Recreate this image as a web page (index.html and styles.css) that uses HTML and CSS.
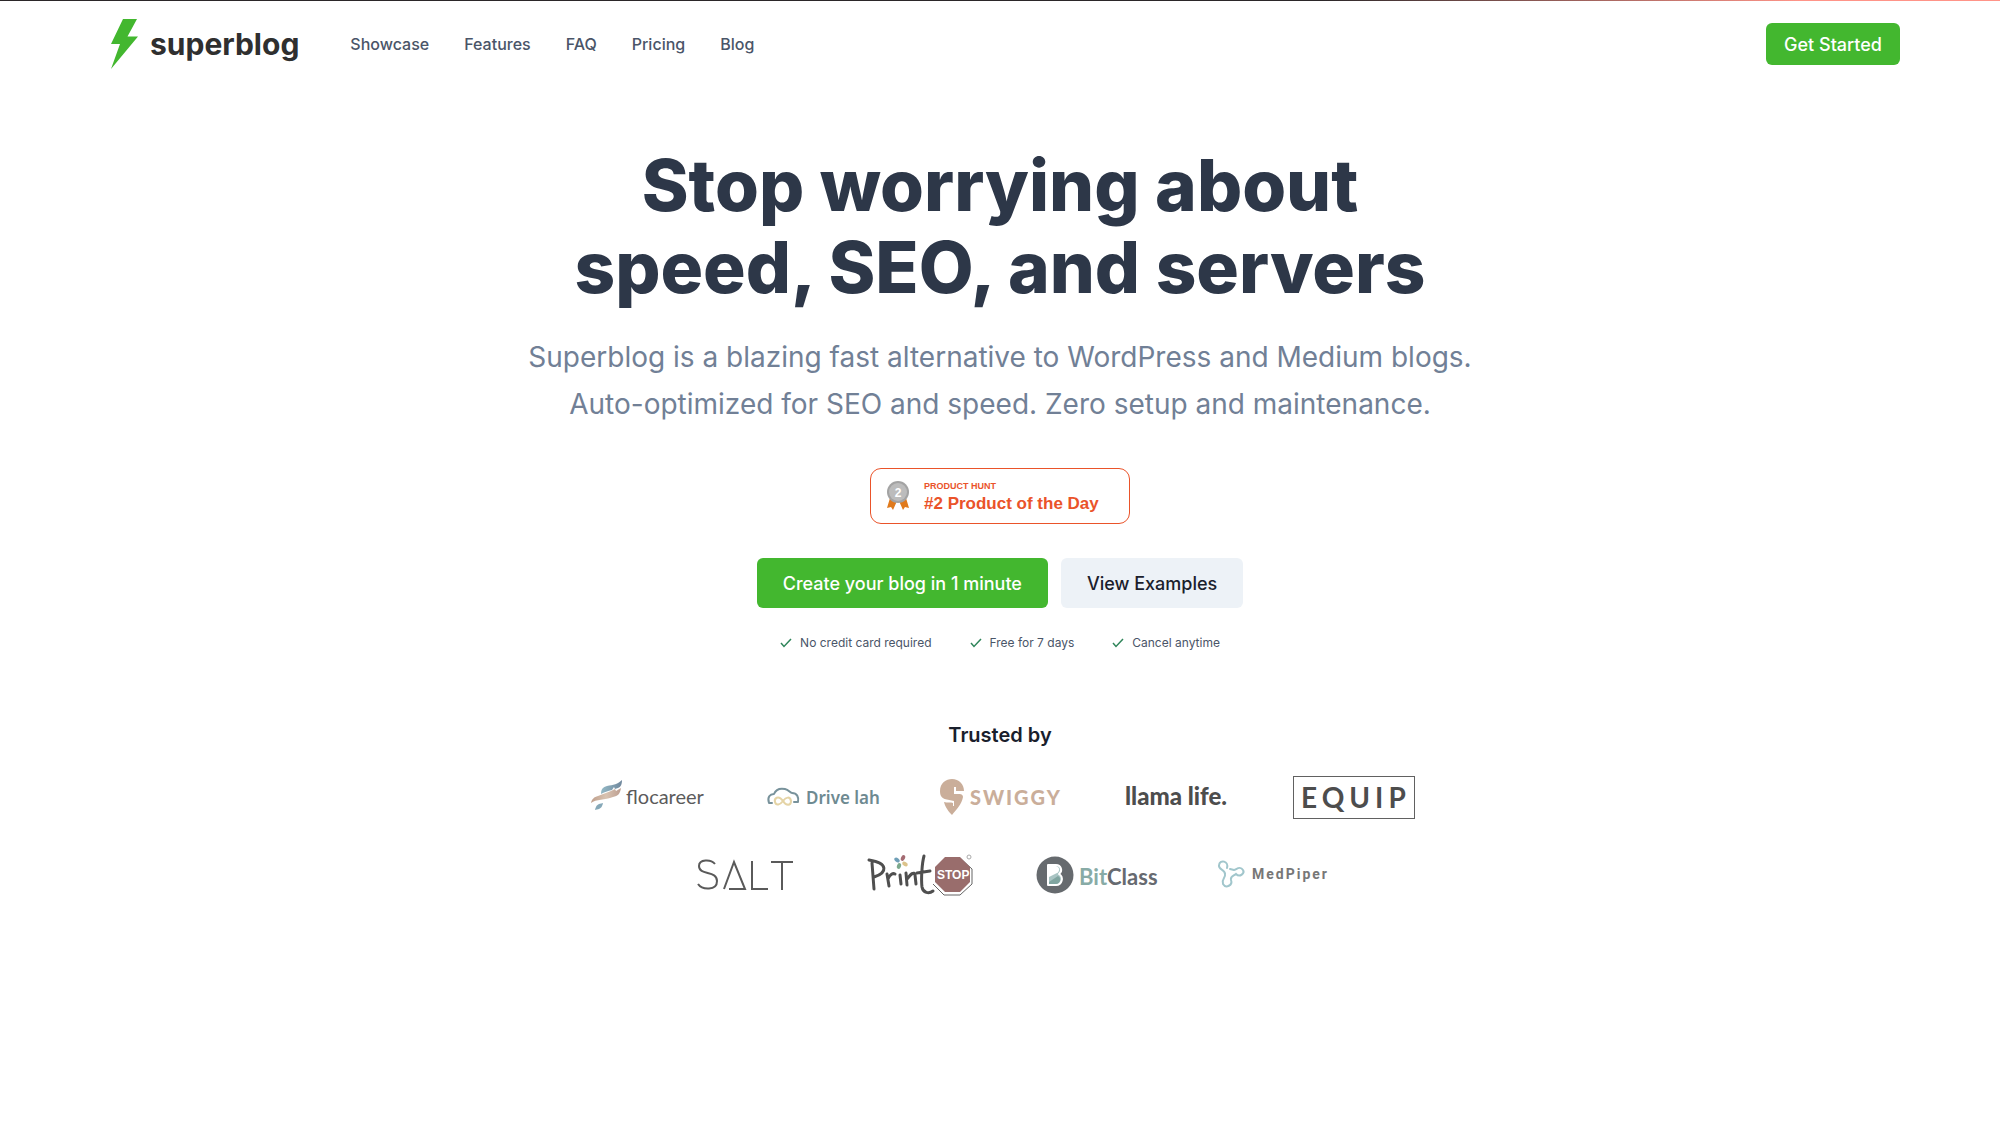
FILE: index.html
```html
<!DOCTYPE html>
<html lang="en">
<head>
    <meta charset="UTF-8">
    <meta name="viewport" content="width=device-width, initial-scale=1.0">
    <title>Superblog - Blazing fast blogging platform</title>
    <link rel="stylesheet" href="styles.css">
</head>
<body>
    <div class="top-line"></div>
    <header class="header">
        <a href="#" class="brand">
            <svg class="bolt" viewBox="0 0 27 50" aria-hidden="true">
                <path d="M12 0H26L16.500 17.500H27L0 50L9 25H0Z" fill="#43b72f"/>
            </svg>
            <span>superblog</span>
        </a>
        <nav class="nav">
            <a href="#">Showcase</a>
            <a href="#">Features</a>
            <a href="#">FAQ</a>
            <a href="#">Pricing</a>
            <a href="#">Blog</a>
        </nav>
        <button type="button" class="btn btn-small">Get Started</button>
    </header>

    <main class="hero">
        <h1>Stop worrying about<br>speed, SEO, and servers</h1>
        <p class="lead">Superblog is a blazing fast alternative to WordPress and Medium blogs.<br>Auto-optimized for SEO and speed. Zero setup and maintenance.</p>

        <a href="#" class="ph-badge">
            <svg class="medal" viewBox="0 0 22 30" aria-hidden="true">
                <path d="M3 17L0 27L4 26L6 29L10 20Z" fill="#e07a1c"/>
                <path d="M19 17L22 27L18 26L16 29L12 20Z" fill="#e07a1c"/>
                <circle cx="11" cy="11" r="11" fill="#a3a3a3"/>
                <circle cx="11" cy="11" r="9" fill="#bcbcbc"/>
                <text x="11" y="15.500" class="medal-number">2</text>
            </svg>
            <span class="ph-text">
                <span class="ph-label">PRODUCT HUNT</span>
                <span class="ph-title">#2 Product of the Day</span>
            </span>
        </a>

        <div class="actions">
            <button type="button" class="btn">Create your blog in 1 minute</button>
            <button type="button" class="btn btn-light">View Examples</button>
        </div>

        <ul class="perks">
            <li><svg viewBox="0 0 12 10" aria-hidden="true"><path d="M1 5L4 8.500L11 1"/></svg>No credit card required</li>
            <li><svg viewBox="0 0 12 10" aria-hidden="true"><path d="M1 5L4 8.500L11 1"/></svg>Free for 7 days</li>
            <li><svg viewBox="0 0 12 10" aria-hidden="true"><path d="M1 5L4 8.500L11 1"/></svg>Cancel anytime</li>
        </ul>
    </main>

    <section class="trusted">
        <h2>Trusted by</h2>
        <div class="logos">
            <!-- Flocareer -->
            <svg class="logo" viewBox="0 0 128 48">
                <defs>
                    <linearGradient id="flo-blue" x1="0" x2="1"><stop offset="0" stop-color="#93b9c6"/><stop offset="1" stop-color="#71889d"/></linearGradient>
                    <linearGradient id="flo-tan" x1="0" x2="1"><stop offset="0" stop-color="#bf9e8b"/><stop offset=".5" stop-color="#d8c3b1"/><stop offset="1" stop-color="#bd9e90"/></linearGradient>
                </defs>
                <path d="M17 21C17 16 19 14 23 13C29 12 34 11 38 7C38 11 37 14 34 15L31 16L30 14L28 17C24 18 20 19 17 21Z" fill="url(#flo-blue)"/>
                <path d="M7 30C8 26 10 24 14 23L27 18L31 16L32 18L37 15C36 21 34 23 29 24C21 27 12 26 7 30Z" fill="url(#flo-tan)"/>
                <path d="M11 37C12 32 14 31 19 30C18 35 16 36 11 37Z" fill="#86a8b8"/>
                <text x="42" y="31" class="flo-text">flocareer</text>
            </svg>
            <!-- Drive lah -->
            <svg class="logo" viewBox="0 0 128 48">
                <path d="M12 30H9C7 24 10 21 14 21C16 16 20 15 25 16C29 17 30 20 32 20C37 20 39 24 38 29H34" fill="none" stroke="#78929b" stroke-width="2" stroke-linejoin="round" stroke-linecap="round"/>
                <path d="M23 28C18 21 14 26 15 29C16 33 20 32 23 28C26 24 30 23 31 28C31 33 26 33 23 28Z" fill="none" stroke="#e5d4a6" stroke-width="2"/>
                <text x="46" y="31" class="drive-text">Drive lah</text>
            </svg>
            <!-- Swiggy -->
            <svg class="logo" viewBox="0 0 128 48">
                <path d="M16 42C13 39 9 34 8 29C11 30 15 29 17 30V33H18V28C12 26 4 28 4 18C4 10 10 6 16 6C23 6 28 11 28 18H20V14H18V21C22 21 27 20 27 24C26 31 20 37 16 42Z" fill="#caae9a"/>
                <text x="34" y="32" class="swiggy-text">SWIGGY</text>
            </svg>
            <!-- Llama life -->
            <svg class="logo" viewBox="0 0 128 48">
                <text x="13" y="32" class="llama-text">llama life.</text>
            </svg>
            <!-- Equip -->
            <svg class="logo" viewBox="0 0 128 48">
                <rect x="5.500" y="3.500" width="121" height="42" fill="none" stroke="#616161"/>
                <text x="13" y="35" class="equip-text">EQUIP</text>
            </svg>
        </div>
        <div class="logos logos-second">
            <!-- Salt -->
            <svg class="logo" viewBox="0 0 128 48" role="img" aria-label="Salt">
                <g fill="none" stroke="#5a5a5a" stroke-width="2">
                    <path d="M34 13C30 8 18 8 18 15C18 25 36 19 36 30C36 40 21 39 17 33"/>
                    <path d="M43 38L53 11L64 38H48"/>
                    <path d="M71 10V38H87"/>
                    <path d="M90 11H112M101 11V39"/>
                </g>
            </svg>
            <!-- PrintStop -->
            <svg class="logo" viewBox="0 0 128 48" role="img" aria-label="PrintStop">
                <g fill="none" stroke="#4f4f4f" stroke-width="3" stroke-linecap="round" stroke-linejoin="round">
                    <path d="M15 12L17 38M12 9C32 12 30 22 17 26M30 23L32 35M31 28C33 23 36 22 38 23M43 24L44 33M49 22L50 34M50 28C54 23 57 20 58 24L59 33M67 5C65 12 64 28 65 36C66 42 72 43 76 40M60 22L73 20"/>
                </g>
                <ellipse cx="40" cy="9" rx="2" ry="3" fill="#6f9fb7" transform="rotate(-50 40 9)"/>
                <ellipse cx="46" cy="7" rx="2" ry="3" fill="#a46b72" transform="rotate(25 46 7)"/>
                <ellipse cx="48" cy="13" rx="2" ry="3" fill="#dcc38b" transform="rotate(-60 48 13)"/>
                <ellipse cx="42" cy="15" rx="2" ry="3" fill="#7da98d" transform="rotate(20 42 15)"/>
                <path d="M88 7H103L115 18V33L103 44H87L76 33" fill="none" stroke="#656565"/>
                <path d="M88 6H103L113 16V31L103 41H88L78 31V16Z" fill="#996d6c"/>
                <text x="80" y="28" class="stop-text">STOP</text>
                <circle cx="112" cy="6" r="2" fill="none" stroke="#aaa"/>
            </svg>
            <!-- BitClass -->
            <svg class="logo" viewBox="0 0 128 48">
                <circle cx="22" cy="24" r="18.500" fill="#666a6e"/>
                <path d="M15 14H23C28 14 30 20 26 23C31 26 29 34 23 34H15Z" fill="#a9c4c3" stroke="#fff" stroke-width="2" stroke-linejoin="round"/>
                <path d="M16 15H23C27 16 27 20 24 22L16 26Z" fill="#fff"/>
                <path d="M16 31L25 25C29 27 27 33 23 33H16Z" fill="#80a5a0"/>
                <text x="46" y="34" class="bit-text"><tspan fill="#88aba6">Bit</tspan><tspan fill="#666a70">Class</tspan></text>
            </svg>
            <!-- MedPiper -->
            <svg class="logo" viewBox="0 0 128 48">
                <path d="M18 17C20 10 11 8 10 14C9 19 16 18 16 23C17 27 12 28 14 33C17 38 24 34 22 29C21 25 25 25 27 23C31 27 36 22 34 19C31 14 27 19 25 19L21 18" fill="none" stroke="#a1c6cc" stroke-width="2" stroke-linecap="round"/>
                <text x="43" y="28" class="med-text">MedPiper</text>
            </svg>
        </div>
    </section>
</body>
</html>
```
FILE: styles.css
```css
* {
    box-sizing: border-box;
}

body {
    margin: 0;
    background: #fff;
    color: #1a202c;
    font-family: 'Inter', sans-serif;
}

a {
    color: inherit;
    text-decoration: none;
}

.top-line {
    height: 1px;
    background: linear-gradient(90deg, #2b2729 66%, #ff9488 90%);
}

.header {
    display: flex;
    align-items: center;
    padding: 18px 100px 0 111px;
}

.brand {
    display: flex;
    align-items: center;
    gap: 12px;
    margin-right: 51px;
    color: #2f2f2f;
    font-size: 30px;
    font-weight: 700;
}

.bolt {
    width: 27px;
    height: 50px;
}

.nav {
    display: flex;
    flex: 1;
    gap: 35px;
    color: #4a5568;
    font-size: 16px;
    font-weight: 500;
}

.btn {
    height: 50px;
    padding: 0 26px;
    border: none;
    border-radius: 6px;
    background: #43b72f;
    color: #fff;
    font-family: inherit;
    font-size: 18px;
    font-weight: 500;
    cursor: pointer;
}

.btn-small {
    height: 42px;
    padding: 0 18px;
}

.btn-light {
    background: #edf2f7;
    color: #1a202c;
}

.hero {
    display: flex;
    flex-direction: column;
    align-items: center;
    margin-top: 75px;
    text-align: center;
}

h1 {
    margin: 0;
    color: #2d3748;
    font-size: 71px;
    font-weight: 800;
    line-height: 82px;
}

.lead {
    margin: 26px 0 0;
    color: #718096;
    font-size: 28px;
    line-height: 47px;
}

.ph-badge {
    display: flex;
    align-items: center;
    gap: 15px;
    width: 260px;
    height: 56px;
    margin-top: 40px;
    padding-left: 16px;
    border: 1px solid #ea532a;
    border-radius: 11px;
    color: #ea532a;
    font-family: 'Liberation Sans', Arial, sans-serif;
    font-weight: 700;
    text-align: left;
}

.medal {
    width: 22px;
    height: 30px;
}

.medal-number {
    fill: #fff;
    font-size: 12px;
    text-anchor: middle;
}

.ph-text {
    display: flex;
    flex-direction: column;
    padding-top: 3px;
}

.ph-label {
    font-size: 9px;
    line-height: 12px;
}

.ph-title {
    font-size: 17px;
    line-height: 24px;
}

.actions {
    display: flex;
    gap: 13px;
    margin-top: 34px;
}

.perks {
    display: flex;
    gap: 38px;
    margin: 26px 0 0;
    padding: 0;
    color: #4a5568;
    font-size: 12px;
    line-height: 18px;
    list-style: none;
}

.perks li {
    display: flex;
    align-items: center;
    gap: 8px;
}

.perks svg {
    width: 12px;
    height: 10px;
    fill: none;
    stroke: #2f855a;
    stroke-width: 1.5;
}

.trusted {
    margin-top: 69px;
    text-align: center;
}

h2 {
    margin: 0 0 24px;
    font-size: 20px;
    font-weight: 600;
    line-height: 28px;
}

.logos {
    display: flex;
    justify-content: center;
    gap: 48px;
    margin-bottom: 30px;
}

.logos-second {
    padding-left: 18px;
}

.logo {
    width: 128px;
    height: 48px;
}

.flo-text {
    fill: #5b5b5b;
    font-family: 'Lato', sans-serif;
    font-size: 20px;
}

.drive-text {
    fill: #6e8a91;
    font-family: 'Noto Sans', sans-serif;
    font-size: 17px;
    font-weight: 600;
}

.swiggy-text {
    fill: #caae9a;
    font-family: 'Lato', sans-serif;
    font-size: 20px;
    font-weight: 900;
    letter-spacing: 2px;
}

.llama-text {
    fill: #4d4d4d;
    font-family: 'Lato', sans-serif;
    font-size: 24px;
    font-weight: 900;
}

.equip-text {
    fill: #4d4d4d;
    font-family: 'Lato', sans-serif;
    font-size: 28px;
    font-weight: 700;
    letter-spacing: 5px;
}

.stop-text {
    fill: #fff;
    font-family: 'Liberation Sans', Arial, sans-serif;
    font-size: 12px;
    font-weight: 700;
}

.bit-text {
    font-family: 'Lato', sans-serif;
    font-size: 22px;
    font-weight: 700;
}

.med-text {
    fill: #777;
    font-family: 'Roboto', sans-serif;
    font-size: 14px;
    font-weight: 700;
    letter-spacing: 2px;
}
```
